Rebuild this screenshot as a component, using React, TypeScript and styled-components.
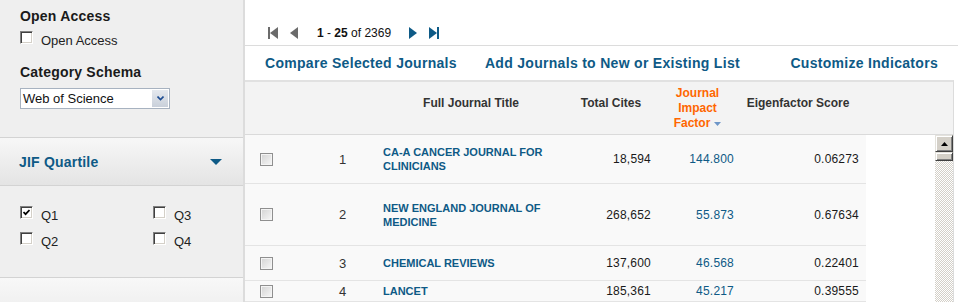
import styled, { createGlobalStyle } from "styled-components";

type Journal = {
  rank: number;
  title: string;
  cites: string;
  jif: string;
  eigen: string;
  height: number;
};

const journals: Journal[] = [
  { rank: 1, title: "CA-A CANCER JOURNAL FOR CLINICIANS", cites: "18,594", jif: "144.800", eigen: "0.06273", height: 48 },
  { rank: 2, title: "NEW ENGLAND JOURNAL OF MEDICINE", cites: "268,652", jif: "55.873", eigen: "0.67634", height: 61 },
  { rank: 3, title: "CHEMICAL REVIEWS", cites: "137,600", jif: "46.568", eigen: "0.22401", height: 34 },
  { rank: 4, title: "LANCET", cites: "185,361", jif: "45.217", eigen: "0.39555", height: 20 },
];

const quartiles = [
  { id: "Q1", checked: true },
  { id: "Q3", checked: false },
  { id: "Q2", checked: false },
  { id: "Q4", checked: false },
];

const BLUE = "#0e5a86";
const COLUMNS = "65px 65px 192px 88px 85px 126px";

function App() {
  return (
    <>
      <GlobalStyle />
      <Page>
        <Sidebar>
          <FilterSection>
            <Heading>Open Access</Heading>
            <CheckRow $mt={7}>
              <ClassicBox />
              <CheckLabel>Open Access</CheckLabel>
            </CheckRow>
            <Heading $mt={17}>Category Schema</Heading>
            <Select>
              <SelectText>Web of Science</SelectText>
              <SelectButton>
                <svg width="7" height="5" viewBox="0 0 7 5">
                  <path d="M0.5 0.5 L3.5 3.5 L6.5 0.5" stroke="#1d4c92" strokeWidth="1.6" fill="none" />
                </svg>
              </SelectButton>
            </Select>
          </FilterSection>

          <PanelHeader>
            <PanelTitle>JIF Quartile</PanelTitle>
            <svg width="12" height="6" viewBox="0 0 12 6">
              <polygon points="0,0 12,0 6,6" fill={BLUE} />
            </svg>
          </PanelHeader>

          <QuartileGrid>
            {quartiles.map((q) => (
              <CheckRow key={q.id}>
                <ClassicBox>
                  {q.checked && (
                    <svg width="7" height="7" viewBox="0 0 7 7">
                      <path d="M0.5 3 L2.6 5.2 L6.5 1" stroke="#000" strokeWidth="1.7" fill="none" />
                    </svg>
                  )}
                </ClassicBox>
                <CheckLabel>{q.id}</CheckLabel>
              </CheckRow>
            ))}
          </QuartileGrid>

          <LowerPanel />
        </Sidebar>

        <Main>
          <Pager>
            <PagerIcon width="10" height="12" viewBox="0 0 10 12" $ml={0}>
              <rect x="0" y="0" width="2" height="12" fill="#6b6b6b" />
              <polygon points="10,0 10,12 2,6" fill="#6b6b6b" />
            </PagerIcon>
            <PagerIcon width="8" height="12" viewBox="0 0 8 12" $ml={12}>
              <polygon points="8,0 8,12 0,6" fill="#6b6b6b" />
            </PagerIcon>
            <PagerText>
              <b>1</b> - <b>25</b> of 2369
            </PagerText>
            <PagerIcon width="8" height="12" viewBox="0 0 8 12" $ml={18}>
              <polygon points="0,0 0,12 8,6" fill={BLUE} />
            </PagerIcon>
            <PagerIcon width="10" height="12" viewBox="0 0 10 12" $ml={12}>
              <polygon points="0,0 0,12 8,6" fill={BLUE} />
              <rect x="8" y="0" width="2" height="12" fill={BLUE} />
            </PagerIcon>
          </Pager>

          <ActionBar>
            <ActionLink>Compare Selected Journals</ActionLink>
            <ActionLink>Add Journals to New or Existing List</ActionLink>
            <ActionLink $push>Customize Indicators</ActionLink>
          </ActionBar>

          <TableBox>
            <HeaderRow>
              <HeaderCell />
              <HeaderCell />
              <HeaderCell>Full Journal Title</HeaderCell>
              <HeaderCell>Total Cites</HeaderCell>
              <HeaderCell $active>
                Journal
                <br />
                Impact
                <br />
                Factor
                <SortArrow width="7" height="4" viewBox="0 0 7 4">
                  <polygon points="0,0 7,0 3.5,4" fill="#6e96c8" />
                </SortArrow>
              </HeaderCell>
              <HeaderCell $pr={10}>Eigenfactor Score</HeaderCell>
              <HeaderCell />
            </HeaderRow>

            <Body>
              <Rows>
                {journals.map((j) => (
                  <Row key={j.rank} $h={j.height}>
                    <BoxCell>
                      <RowBox />
                    </BoxCell>
                    <RankCell>{j.rank}</RankCell>
                    <TitleCell>{j.title}</TitleCell>
                    <ValueCell $pr={4}>{j.cites}</ValueCell>
                    <ValueCell $pr={6} $link>
                      {j.jif}
                    </ValueCell>
                    <ValueCell $pr={7}>{j.eigen}</ValueCell>
                  </Row>
                ))}
              </Rows>
              <Filler />
              <Scrollbar>
                <ScrollButton>
                  <svg width="7" height="4" viewBox="0 0 7 4">
                    <polygon points="0,4 7,4 3.5,0" fill="#000" />
                  </svg>
                </ScrollButton>
                <ScrollThumb />
              </Scrollbar>
            </Body>
          </TableBox>
        </Main>
      </Page>
    </>
  );
}

export default App;

const GlobalStyle = createGlobalStyle`
  html, body {
    margin: 0;
    padding: 0;
    background: #fff;
  }

  body {
    font-family: "Liberation Sans", Arial, sans-serif;
    color: #222;
  }
`;

const Page = styled.div`
  display: flex;
  height: 302px;
  overflow: hidden;
`;

const Sidebar = styled.aside`
  width: 245px;
  flex-shrink: 0;
  box-sizing: border-box;
  border-right: 2px solid #dcdcdc;
  background: #efefef;
  display: flex;
  flex-direction: column;
`;

const FilterSection = styled.section`
  height: 138px;
  box-sizing: border-box;
  border-bottom: 1px solid #d3d3d3;
  padding: 8px 0 0 20px;
`;

const Heading = styled.h3<{ $mt?: number }>`
  margin: ${(p) => p.$mt ?? 0}px 0 0;
  font-size: 14px;
  line-height: 16px;
  font-weight: bold;
  color: #1a1a1a;
  letter-spacing: 0.2px;
`;

const CheckRow = styled.label<{ $mt?: number }>`
  display: flex;
  align-items: flex-start;
  gap: 8px;
  margin-top: ${(p) => p.$mt ?? 0}px;
  height: 16px;
`;

const ClassicBox = styled.span`
  width: 13px;
  height: 13px;
  box-sizing: border-box;
  background: #fff;
  border: 1px solid;
  border-color: #808080 #fff #fff #808080;
  box-shadow: inset 1px 1px #404040, inset -1px -1px #d4d0c8;
  display: flex;
  align-items: center;
  justify-content: center;
  flex-shrink: 0;
`;

const CheckLabel = styled.span`
  font-size: 13px;
  line-height: 16px;
  padding-top: 2px;
  color: #222;
`;

const Select = styled.div`
  margin-top: 8px;
  width: 150px;
  height: 21px;
  box-sizing: border-box;
  border: 1px solid #a7b2c0;
  background: #fff;
  display: flex;
`;

const SelectText = styled.span`
  flex: 1;
  font-size: 13px;
  line-height: 19px;
  padding-left: 2px;
  color: #111;
`;

const SelectButton = styled.span`
  width: 16px;
  margin: 1px;
  background: linear-gradient(#e4e8ee, #c9d0da);
  display: flex;
  align-items: center;
  justify-content: center;
`;

const PanelHeader = styled.div`
  height: 48px;
  box-sizing: border-box;
  border-bottom: 1px solid #d3d3d3;
  background: linear-gradient(#f7f7f7, #e4e4e4);
  display: flex;
  align-items: center;
  justify-content: space-between;
  padding: 0 21px 0 19px;
`;

const PanelTitle = styled.span`
  font-size: 14px;
  font-weight: bold;
  color: ${BLUE};
  letter-spacing: 0.2px;
`;

const QuartileGrid = styled.div`
  height: 92px;
  box-sizing: border-box;
  border-bottom: 1px solid #d3d3d3;
  padding: 20px 0 0 20px;
  display: grid;
  grid-template-columns: 133px 1fr;
  row-gap: 10px;
  align-content: start;
`;

const LowerPanel = styled.div`
  flex: 1;
  background: linear-gradient(#f8f8f8, #f1f1f1);
`;

const Main = styled.main`
  flex: 1;
  min-width: 0;
  display: flex;
  flex-direction: column;
  background: #fff;
`;

const Pager = styled.div`
  height: 46px;
  box-sizing: border-box;
  border-bottom: 1px solid #dcdcdc;
  padding: 20px 0 0 23px;
  display: flex;
  align-items: center;
`;

const PagerIcon = styled.svg<{ $ml: number }>`
  display: block;
  margin-left: ${(p) => p.$ml}px;
`;

const PagerText = styled.span`
  margin-left: 19px;
  font-size: 12px;
  line-height: 14px;
  color: #111;
`;

const ActionBar = styled.div`
  height: 34px;
  display: flex;
  align-items: center;
  gap: 28px;
  padding: 0 20px;
`;

const ActionLink = styled.a<{ $push?: boolean }>`
  font-size: 14px;
  font-weight: bold;
  letter-spacing: 0.3px;
  color: ${BLUE};
  cursor: pointer;
  margin-left: ${(p) => (p.$push ? "auto" : "0")};
`;

const TableBox = styled.div`
  width: 709px;
  flex: 1;
  box-sizing: border-box;
  border-top: 2px solid #e1e1e1;
  border-right: 1px solid #dcdcdc;
  display: flex;
  flex-direction: column;
  overflow: hidden;
`;

const HeaderRow = styled.div`
  display: grid;
  grid-template-columns: ${COLUMNS} 1fr;
  height: 53px;
  flex-shrink: 0;
  box-sizing: border-box;
  border-bottom: 1px solid #dadada;
  background: #f3f3f3;
`;

const HeaderCell = styled.div<{ $active?: boolean; $pr?: number }>`
  text-align: center;
  font-size: 12px;
  font-weight: bold;
  line-height: ${(p) => (p.$active ? 15 : 14)}px;
  padding-top: ${(p) => (p.$active ? 4 : 14)}px;
  padding-right: ${(p) => p.$pr ?? 0}px;
  color: ${(p) => (p.$active ? "#ff6600" : "#333")};
`;

const SortArrow = styled.svg`
  margin-left: 4px;
  vertical-align: 1px;
`;

const Body = styled.div`
  flex: 1;
  display: flex;
  min-height: 0;
`;

const Rows = styled.div`
  width: 621px;
  background: #f9f9f9;
`;

const Row = styled.div<{ $h: number }>`
  display: grid;
  grid-template-columns: ${COLUMNS};
  align-items: center;
  height: ${(p) => p.$h}px;
  border-bottom: 1px solid #e4e4e4;
`;

const BoxCell = styled.div`
  padding-left: 15px;
  display: flex;
`;

const RowBox = styled.span`
  width: 13px;
  height: 13px;
  box-sizing: border-box;
  border: 1px solid #8f8f8f;
  background: linear-gradient(135deg, #d3d3d3, #f7f7f7);
  box-shadow: inset 0 0 0 1px #f4f4f4;
`;

const RankCell = styled.div`
  text-align: center;
  font-size: 13px;
  color: #333;
`;

const TitleCell = styled.div`
  padding-left: 8px;
  font-size: 11px;
  line-height: 14px;
  font-weight: bold;
  color: ${BLUE};
`;

const ValueCell = styled.div<{ $pr: number; $link?: boolean }>`
  text-align: right;
  padding-right: ${(p) => p.$pr}px;
  font-size: 12px;
  color: ${(p) => (p.$link ? BLUE : "#1a1a1a")};
  letter-spacing: 0.2px;
`;

const Filler = styled.div`
  flex: 1;
  background: #fff;
`;

const Scrollbar = styled.div`
  width: 18px;
  display: flex;
  flex-direction: column;
  background-color: #fff;
  background-image: repeating-conic-gradient(#d4d0c8 0% 25%, #fff 0% 50%);
  background-size: 2px 2px;
`;

const ScrollButton = styled.div`
  height: 17px;
  box-sizing: border-box;
  background: #d4d0c8;
  border: 1px solid;
  border-color: #e4e2dc #404040 #404040 #e4e2dc;
  box-shadow: inset 1px 1px #fff, inset -1px -1px #808080;
  display: flex;
  align-items: center;
  justify-content: center;
`;

const ScrollThumb = styled(ScrollButton)`
  height: 9px;
`;
